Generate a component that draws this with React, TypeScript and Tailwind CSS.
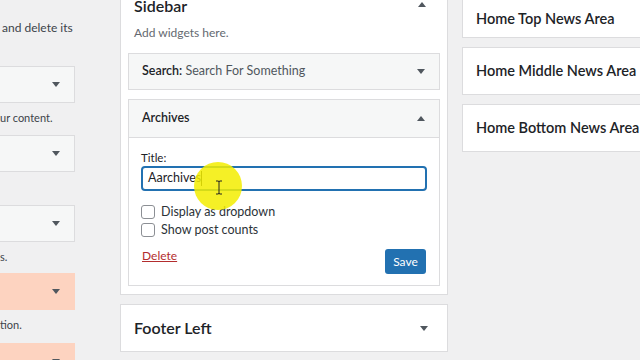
import React from "react";

function ArrowDown() {
  return (
    <svg width="8" height="5" viewBox="0 0 8 5" className="shrink-0">
      <path d="M0 0h8L4 5z" fill="#50575e" />
    </svg>
  );
}

function ArrowUp() {
  return (
    <svg width="8" height="5" viewBox="0 0 8 5" className="shrink-0">
      <path d="M0 5h8L4 0z" fill="#50575e" />
    </svg>
  );
}

function LeftBox({ salmon }: { salmon?: boolean }) {
  return (
    <div
      className={`h-[37px] w-[75px] flex items-center justify-end pr-[14px] border border-l-0 ${
        salmon ? "bg-[#fdd3c0] border-[#fdd3c0]" : "bg-[#f6f7f7] border-[#dcdcde]"
      }`}
    >
      <ArrowDown />
    </div>
  );
}

function RightArea({ title, first }: { title: string; first?: boolean }) {
  return (
    <div
      className={`w-[200px] bg-white border border-r-0 border-[#dcdcde] flex items-center pl-[13px] text-[14.5px] font-semibold text-[#1d2327] whitespace-nowrap ${
        first ? "h-[63px] -mt-[25px] pt-[25px]" : "h-[48px] mt-[9px]"
      }`}
    >
      {title}
    </div>
  );
}

export default function App() {
  return (
    <div
      className="relative w-[640px] h-[360px] overflow-hidden bg-[#f0f0f1] flex text-[#1d2327]"
      style={{ fontFamily: '"Segoe UI", Lato, "Open Sans", sans-serif' }}
    >
      {/* available widgets column (cut off) */}
      <div className="w-[120px] shrink-0 flex flex-col text-[11px] text-[#3c434a]">
        <p className="mt-[20px] h-[16px] leading-[16px] pl-[2px] text-[12px] whitespace-nowrap">and delete its</p>
        <div className="mt-[30px]"><LeftBox /></div>
        <p className="mt-[7px] h-[16px] leading-[16px] whitespace-nowrap">ur content.</p>
        <div className="mt-[9px]"><LeftBox /></div>
        <div className="mt-[33px]"><LeftBox /></div>
        <p className="mt-[7px] h-[16px] leading-[16px] whitespace-nowrap">s.</p>
        <div className="mt-[8px]"><LeftBox salmon /></div>
        <p className="mt-[7px] h-[16px] leading-[16px] whitespace-nowrap">tion.</p>
        <div className="mt-[10px]"><LeftBox salmon /></div>
      </div>

      {/* sidebar column */}
      <div className="w-[328px] shrink-0 flex flex-col">
        <div className="-mt-[20px] bg-white border border-[#dcdcde] px-[7px] pb-[8px]">
          <div className="flex items-start justify-between pl-[6px] pr-[14px] h-[45px] pt-[15px]">
            <h2 className="text-[16px] leading-[20px] font-semibold">Sidebar</h2>
            <span className="pt-[6px]"><ArrowUp /></span>
          </div>
          <p className="pl-[6px] text-[12px] text-[#646970] h-[14px] leading-[14px]">Add widgets here.</p>
          <div className="mt-[13px] h-[37px] bg-[#f6f7f7] border border-[#dcdcde] flex items-center justify-between pl-[13px] pr-[14px] text-[12.5px]">
            <span>
              <span className="font-semibold">Search:</span>{" "}
              <span className="text-[#50575e]">Search For Something</span>
            </span>
            <ArrowDown />
          </div>
          <div className="mt-[9px] border border-[#dcdcde]">
            <div className="h-[38px] bg-[#f6f7f7] border-b border-[#dcdcde] flex items-center justify-between pl-[13px] pr-[14px] text-[12.5px] font-semibold">
              <span>Archives</span>
              <ArrowUp />
            </div>
            <div className="bg-white px-[12px] pt-[13px] pb-[11px]">
              <label className="block text-[11.5px] h-[14px] leading-[14px]">Title:</label>
              <div className="mt-[1px] h-[25px] border-2 border-[#2271b1] rounded-[4px] flex items-center pl-[5px] text-[12.5px]">
                <span>Aarchives</span>
                <span className="w-[1px] h-[15px] bg-[#1d2327]" />
              </div>
              <div className="mt-[14px] flex flex-col gap-[4px] text-[12.5px] text-[#2c3338]">
                <div className="flex items-center gap-[6px] h-[14px]">
                  <span className="w-[14px] h-[14px] border border-[#8c8f94] rounded-[3px] bg-white" />
                  <span>Display as dropdown</span>
                </div>
                <div className="flex items-center gap-[6px] h-[14px]">
                  <span className="w-[14px] h-[14px] border border-[#8c8f94] rounded-[3px] bg-white" />
                  <span>Show post counts</span>
                </div>
              </div>
              <div className="mt-[12px] flex items-end justify-between">
                <a className="mb-[11px] pl-[1px] text-[12px] text-[#b32d2e] underline leading-[14px]">Delete</a>
                <button className="w-[41px] h-[25px] mr-[1px] rounded-[3px] bg-[#2271b1] text-white text-[12px]">Save</button>
              </div>
            </div>
          </div>
        </div>
        <div className="mt-[9px] h-[48px] bg-white border border-[#dcdcde] flex items-center justify-between pl-[13px] pr-[19px]">
          <h2 className="text-[16px] font-semibold">Footer Left</h2>
          <ArrowDown />
        </div>
      </div>

      {/* right column */}
      <div className="ml-[14px] flex flex-col">
        <RightArea title="Home Top News Area" first />
        <RightArea title="Home Middle News Area" />
        <RightArea title="Home Bottom News Area" />
      </div>

      {/* cursor highlight */}
      <div className="absolute left-[194px] top-[162px] w-[48px] h-[48px] rounded-full bg-[#f3ee00]/85 pointer-events-none" />
      <svg className="absolute left-[215px] top-[180px]" width="8" height="15" viewBox="0 0 8 15">
        <path d="M1 1h2.5L4 2l.5-1H7M4 2v11M1 14h2.5L4 13l.5 1H7" stroke="#222" strokeWidth="1" fill="none" />
      </svg>
    </div>
  );
}
